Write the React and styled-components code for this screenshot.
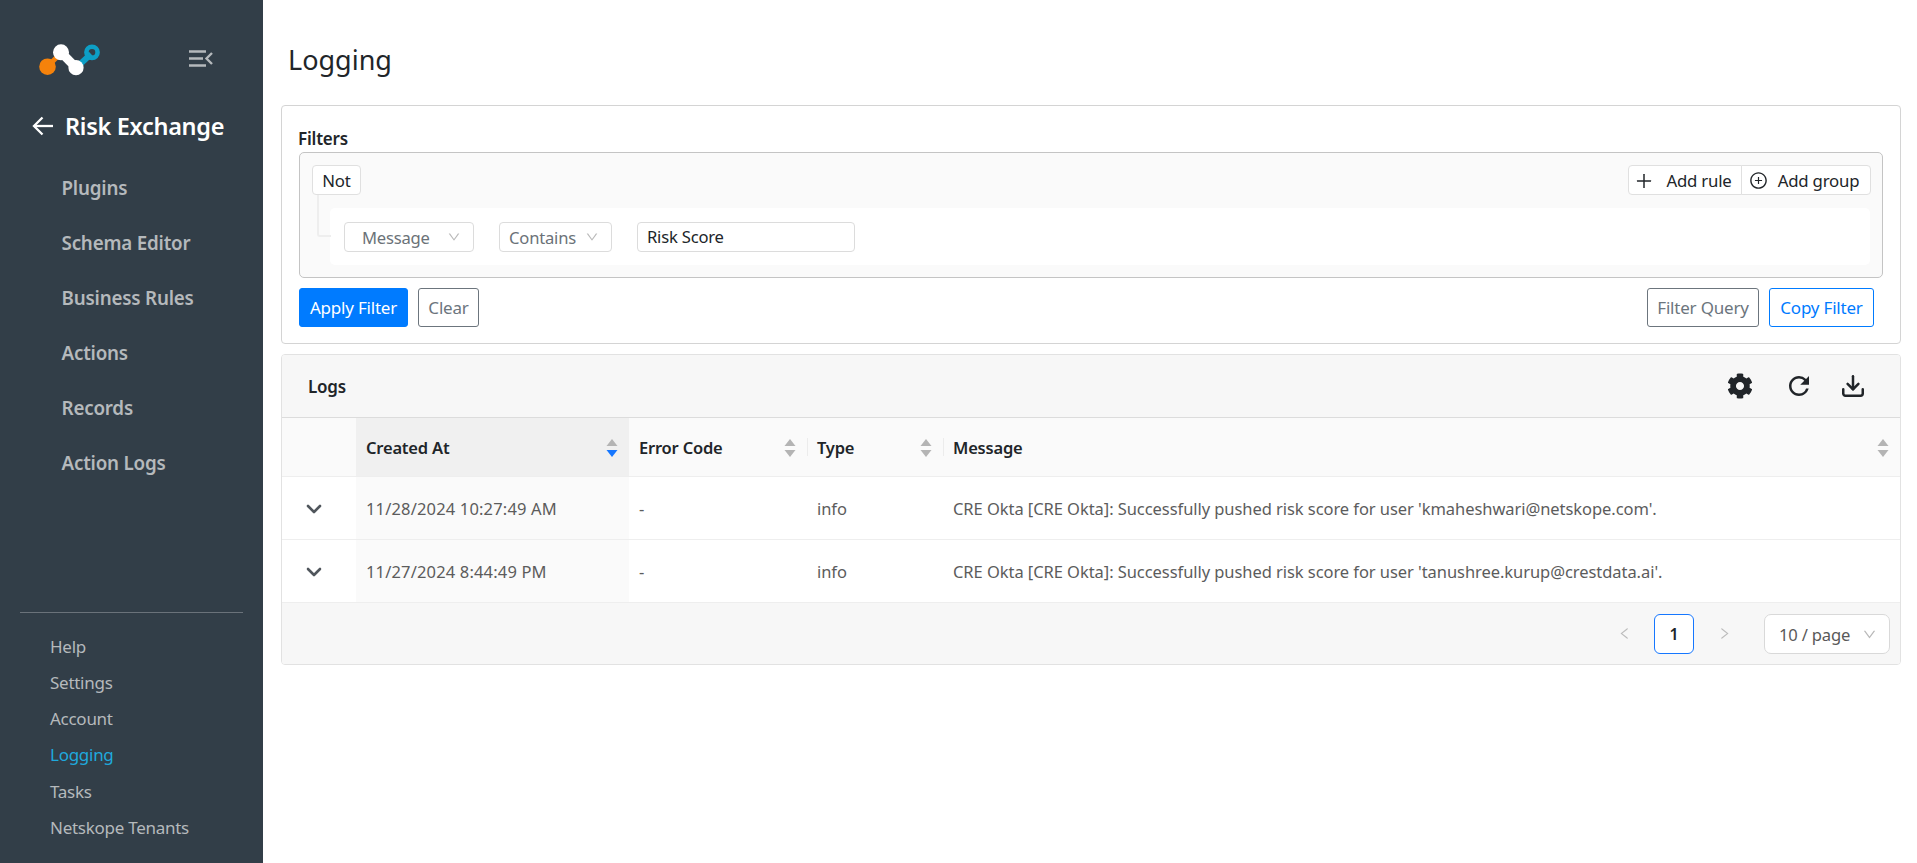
import React from 'react';
import styled, { createGlobalStyle } from 'styled-components';
import { AiOutlineDown, AiOutlineLeft, AiOutlineRight, AiOutlinePlus, AiOutlinePlusCircle } from 'react-icons/ai';
import { FaCog } from 'react-icons/fa';
import { MdRefresh } from 'react-icons/md';
import { ChevronDown, Download } from 'lucide-react';

const GlobalStyle = createGlobalStyle`
  html, body { margin: 0; padding: 0; background: #fff; }
  * { box-sizing: border-box; }
  body { font-family: "Noto Sans", "Open Sans", sans-serif; color: #212529; overflow: hidden; }
`;

const Page = styled.div`
  display: flex;
  width: 1917px;
  height: 863px;
`;

const Sidebar = styled.aside`
  width: 263px;
  height: 100%;
  flex: none;
  background: #323e48;
  display: flex;
  flex-direction: column;
  padding-top: 44px;
`;

const BrandRow = styled.div`
  display: flex;
  align-items: center;
  height: 32px;
  padding-left: 38px;
  gap: 87px;
`;

const ModuleTitle = styled.div`
  display: flex;
  align-items: center;
  margin: 33px 0 0 32px;
  height: 34px;
  gap: 12px;
  color: #fff;
  font-size: 23.5px;
  font-weight: 600;
  letter-spacing: -0.3px;
`;

const NavList = styled.nav`
  display: flex;
  flex-direction: column;
  margin-top: 18px;
  padding-left: 61.5px;
`;

const NavItem = styled.div`
  height: 55px;
  line-height: 55px;
  color: #b5b9bc;
  font-size: 18.8px;
  font-weight: 600;
  letter-spacing: -0.2px;
`;

const BottomNav = styled.div`
  margin: auto 20px 0;
  padding: 16px 0 17px 30px;
  border-top: 1px solid #6a727a;
  display: flex;
  flex-direction: column;
`;

const BottomItem = styled.div`
  height: 36.2px;
  line-height: 36.2px;
  font-size: 17px;
  letter-spacing: -0.27px;
  color: ${(props) => (props.$active ? '#1fa9dd' : '#b5b9bc')};
`;

const Main = styled.main`
  flex: 1;
  min-width: 0;
  padding: 0 16px 0 18px;
  display: flex;
  flex-direction: column;
`;

const PageTitle = styled.h1`
  margin: 0;
  padding-left: 7px;
  height: 105px;
  line-height: 119px;
  font-size: 27px;
  font-weight: 400;
  color: #212529;
`;

const Card = styled.section`
  border: 1px solid #d4d4d4;
  border-radius: 4px;
  background: #fff;
`;

const FilterCard = styled(Card)`
  height: 239px;
  padding: 0 17px;
`;

const FilterLabel = styled.div`
  height: 46px;
  margin-left: -1px;
  padding-top: 19px;
  line-height: 27px;
  font-size: 17px;
  font-weight: 600;
  letter-spacing: -0.2px;
`;

const QueryBox = styled.div`
  height: 126px;
  border: 1px solid #c4c4c4;
  border-radius: 5px;
  background: #fafafa;
  padding: 12px 12px 0 12px;
  display: flex;
  flex-direction: column;
`;

const QueryTop = styled.div`
  display: flex;
  justify-content: space-between;
  align-items: flex-start;
`;

const SmallBtn = styled.div`
  height: 30px;
  padding-top: 1px;
  display: flex;
  align-items: center;
  background: #fff;
  border: 1px solid #e0e0e0;
  border-radius: 4px;
  font-size: 16.8px;
  letter-spacing: -0.2px;
  color: #212529;
`;

const NotBtn = styled(SmallBtn)`
  width: 49px;
  justify-content: center;
`;

const AddGroup = styled.div`
  display: flex;
  margin-right: -1px;
`;

const AddBtn = styled(SmallBtn)`
  width: ${(props) => props.$w}px;
  padding-right: 4px;
  justify-content: center;
  gap: ${(props) => props.$gap}px;
  border-radius: ${(props) => (props.$first ? '4px 0 0 4px' : '0 4px 4px 0')};
  margin-left: ${(props) => (props.$first ? '0' : '-1px')};
`;

const RuleWrap = styled.div`
  position: relative;
  margin-top: 13px;
  margin-left: 18px;
`;

const Connector = styled.div`
  position: absolute;
  left: -13px;
  top: -13px;
  width: 14px;
  height: 42px;
  border-left: 2px solid #eee;
  border-bottom: 2px solid #eee;
  border-radius: 0 0 0 3px;
`;

const RuleRow = styled.div`
  height: 57px;
  background: #fff;
  border-radius: 5px;
  display: flex;
  align-items: center;
  padding-left: 14px;
`;

const Select = styled.div`
  height: 30px;
  width: ${(props) => props.$w}px;
  margin-right: ${(props) => props.$mr}px;
  padding: 1px ${(props) => props.$pr}px 0 ${(props) => props.$pl}px;
  background: #fff;
  border: 1px solid #dcdcdc;
  border-radius: 4px;
  display: flex;
  align-items: center;
  justify-content: space-between;
  font-size: 16.6px;
  letter-spacing: -0.2px;
  color: #6b7278;
  svg { color: #b9b9b9; }
`;

const TextInput = styled.div`
  height: 30px;
  width: 218px;
  padding: 0 9px;
  background: #fff;
  border: 1px solid #dcdcdc;
  border-radius: 4px;
  display: flex;
  align-items: center;
  font-size: 16.6px;
  letter-spacing: -0.2px;
  color: #212529;
`;

const ActionRow = styled.div`
  display: flex;
  justify-content: space-between;
  margin-top: 10px;
`;

const BtnGroup = styled.div`
  display: flex;
  gap: 10px;
  margin-right: ${(props) => props.$mr || 0}px;
`;

const Button = styled.button`
  height: 39px;
  width: ${(props) => props.$w}px;
  padding: 0;
  font-family: inherit;
  font-size: 17px;
  letter-spacing: -0.2px;
  border-radius: 3px;
  background: ${(props) => (props.$primary ? '#007bff' : '#fff')};
  border: 1px solid ${(props) => (props.$primary ? '#007bff' : props.$outline ? '#007bff' : '#6c757d')};
  color: ${(props) => (props.$primary ? '#fff' : props.$outline ? '#007bff' : '#6c757d')};
`;

const LogsCard = styled(Card)`
  margin-top: 10px;
  height: 311px;
  border-color: #e2e2e2;
  overflow: hidden;
`;

const LogsHeader = styled.div`
  height: 63px;
  padding: 0 34px 0 26px;
  background: #f7f7f7;
  border-bottom: 1px solid #dcdcdc;
  display: flex;
  align-items: center;
  justify-content: space-between;
  font-size: 17px;
  font-weight: 600;
  letter-spacing: -0.2px;
`;

const HeaderIcons = styled.div`
  display: flex;
  align-items: center;
  color: #212529;
`;

const GearIcon = styled(FaCog)`
  margin-right: 31px;
`;

const RefreshIcon = styled(MdRefresh)`
  margin-right: 26px;
`;

const Row = styled.div`
  display: grid;
  grid-template-columns: 74px 273px 178px 136px 1fr;
  height: ${(props) => props.$h}px;
  border-bottom: 1px solid #eee;
`;

const HeadCell = styled.div`
  position: relative;
  display: flex;
  align-items: center;
  justify-content: space-between;
  padding: 1px 11px 0 10px;
  font-size: 16.5px;
  font-weight: 600;
  letter-spacing: -0.2px;
  color: #212529;
  background: ${(props) => (props.$sorted ? '#f0f0f0' : '#fafafa')};
  ${(props) => props.$divider && `
    &::before {
      content: '';
      position: absolute;
      left: 0;
      top: 20px;
      bottom: 20px;
      width: 1px;
      background: #ececec;
    }
  `}
`;

const Cell = styled.div`
  display: flex;
  align-items: center;
  padding: 1px 0 0 10px;
  font-size: 16.5px;
  letter-spacing: ${(props) => (props.$sorted ? '0.16px' : '-0.06px')};
  color: #5c5c5c;
  background: ${(props) => (props.$sorted ? '#fafafa' : '#fff')};
  white-space: nowrap;
`;

const ExpandCell = styled.div`
  display: flex;
  align-items: center;
  padding: 2px 0 0 20px;
  color: #50565c;
`;

const Footer = styled.div`
  height: 61px;
  background: #f7f7f7;
  display: flex;
  align-items: center;
  justify-content: flex-end;
  padding: 0 10px 0 0;
  color: #bcbcbc;
`;

const PageNo = styled.div`
  width: 40px;
  height: 40px;
  margin: 0 23px 0 22px;
  display: flex;
  align-items: center;
  justify-content: center;
  background: #fff;
  border: 1px solid #1677ff;
  border-radius: 6px;
  font-size: 16px;
  font-weight: 600;
  color: #212529;
`;

const PageSize = styled(Select)`
  height: 40px;
  border-radius: 7px;
  border-color: #d9d9d9;
  margin-left: 32px;
  color: #595959;
`;

const SortCaret = ({ active }) => (
  <svg width="12" height="18" viewBox="0 0 12 18">
    <path d="M6 0L11.5 7H.5Z" fill="#b4b4b4" />
    <path d="M6 18L11.5 11H.5Z" fill={active ? '#1677ff' : '#b4b4b4'} />
  </svg>
);

const Logo = () => (
  <svg width="64" height="32" viewBox="0 0 64 32">
    <line x1="10" y1="22" x2="23" y2="9" stroke="#f5820b" strokeWidth="5" />
    <circle cx="9.5" cy="22.7" r="8.3" fill="#f5820b" />
    <line x1="39" y1="23" x2="53" y2="10" stroke="#0d9fc6" strokeWidth="6" />
    <circle cx="54" cy="8.3" r="5.6" fill="none" stroke="#0d9fc6" strokeWidth="4.6" />
    <line x1="23" y1="8.3" x2="38" y2="23.7" stroke="#fff" strokeWidth="9" />
    <circle cx="23" cy="8.3" r="8" fill="#fff" />
    <circle cx="38" cy="23.7" r="7.6" fill="#fff" />
  </svg>
);

const CollapseIcon = () => (
  <svg width="24" height="20" viewBox="0 0 24 20" fill="none" stroke="#b5b9bc" strokeWidth="2.6">
    <path d="M0 1.5H17M0 8.5H14M0 15.5H17" />
    <path d="M23 3L17.5 8.5l5.5 5.5" strokeWidth="2.4" />
  </svg>
);

const BackArrow = () => (
  <svg width="21" height="20" viewBox="0 0 21 20" fill="none" stroke="#fff" strokeWidth="2.3">
    <path d="M21 10H2" />
    <path d="M10.5 1.5L2 10l8.5 8.5" />
  </svg>
);

const logs = [
  { time: '11/28/2024 10:27:49 AM', message: "CRE Okta [CRE Okta]: Successfully pushed risk score for user 'kmaheshwari@netskope.com'." },
  { time: '11/27/2024 8:44:49 PM', message: "CRE Okta [CRE Okta]: Successfully pushed risk score for user 'tanushree.kurup@crestdata.ai'." },
];

const navItems = ['Plugins', 'Schema Editor', 'Business Rules', 'Actions', 'Records', 'Action Logs'];
const bottomItems = ['Help', 'Settings', 'Account', 'Logging', 'Tasks', 'Netskope Tenants'];

export default function App() {
  return (
    <Page>
      <GlobalStyle />
      <Sidebar>
        <BrandRow>
          <Logo />
          <CollapseIcon />
        </BrandRow>
        <ModuleTitle>
          <BackArrow />
          Risk Exchange
        </ModuleTitle>
        <NavList>
          {navItems.map((item) => <NavItem key={item}>{item}</NavItem>)}
        </NavList>
        <BottomNav>
          {bottomItems.map((item) => (
            <BottomItem key={item} $active={item === 'Logging'}>{item}</BottomItem>
          ))}
        </BottomNav>
      </Sidebar>
      <Main>
        <PageTitle>Logging</PageTitle>
        <FilterCard>
          <FilterLabel>Filters</FilterLabel>
          <QueryBox>
            <QueryTop>
              <NotBtn>Not</NotBtn>
              <AddGroup>
                <AddBtn $first $w={114} $gap={12}><AiOutlinePlus size={20} />Add rule</AddBtn>
                <AddBtn $w={130} $gap={10}><AiOutlinePlusCircle size={19} />Add group</AddBtn>
              </AddGroup>
            </QueryTop>
            <RuleWrap>
              <Connector />
              <RuleRow>
                <Select $w={130} $mr={25} $pl={17} $pr={12}>Message<AiOutlineDown size={14} /></Select>
                <Select $w={113} $mr={25} $pl={9} $pr={12}>Contains<AiOutlineDown size={14} /></Select>
                <TextInput>Risk Score</TextInput>
              </RuleRow>
            </RuleWrap>
          </QueryBox>
          <ActionRow>
            <BtnGroup>
              <Button $primary $w={109}>Apply Filter</Button>
              <Button $w={61}>Clear</Button>
            </BtnGroup>
            <BtnGroup $mr={9}>
              <Button $w={112}>Filter Query</Button>
              <Button $outline $w={105}>Copy Filter</Button>
            </BtnGroup>
          </ActionRow>
        </FilterCard>
        <LogsCard>
          <LogsHeader>
            Logs
            <HeaderIcons>
              <GearIcon size={26} />
              <RefreshIcon size={30} />
              <Download size={26} strokeWidth={2.3} />
            </HeaderIcons>
          </LogsHeader>
          <Row $h={59}>
            <HeadCell />
            <HeadCell $sorted>Created At<SortCaret active /></HeadCell>
            <HeadCell>Error Code<SortCaret /></HeadCell>
            <HeadCell $divider>Type<SortCaret /></HeadCell>
            <HeadCell $divider>Message<SortCaret /></HeadCell>
          </Row>
          {logs.map((log) => (
            <Row key={log.time} $h={63}>
              <ExpandCell><ChevronDown size={24} strokeWidth={2.6} /></ExpandCell>
              <Cell $sorted>{log.time}</Cell>
              <Cell>-</Cell>
              <Cell>info</Cell>
              <Cell>{log.message}</Cell>
            </Row>
          ))}
          <Footer>
            <AiOutlineLeft size={15} />
            <PageNo>1</PageNo>
            <AiOutlineRight size={15} />
            <PageSize $w={126} $pl={14} $pr={12}>10 / page<AiOutlineDown size={15} /></PageSize>
          </Footer>
        </LogsCard>
      </Main>
    </Page>
  );
}
